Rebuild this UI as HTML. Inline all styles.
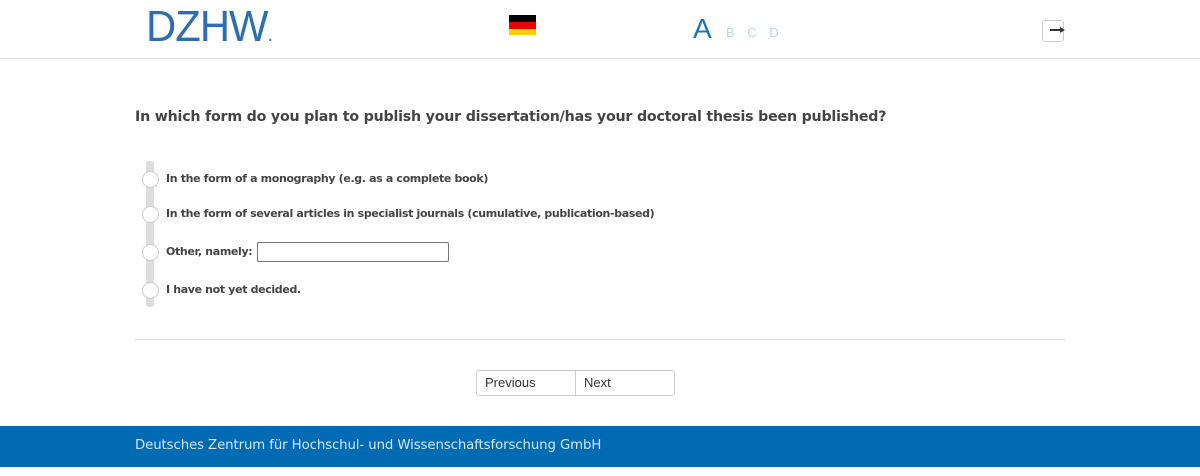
<!DOCTYPE html>
<html><head><meta charset="utf-8"><style>
body{margin:0;width:1200px;height:476px;background:#fff;position:relative;font-family:"DejaVu Sans","Liberation Sans",sans-serif;overflow:hidden}
.a{position:absolute}
.hdr{left:0;top:0;width:1200px;height:58px;border-bottom:1px solid #ddd}
.logo{left:146px;top:5px;font-family:"Liberation Sans",sans-serif;font-size:44px;color:#2d6db5;letter-spacing:-1px;line-height:44px;transform:scaleX(0.95);transform-origin:0 0}
.q{left:135px;top:109px;font-size:14.2px;font-weight:bold;color:#444;letter-spacing:-0.2px}
.opt{left:166px;font-size:11px;font-weight:bold;color:#444;letter-spacing:-0.35px}
.rad{left:142px;width:15px;height:15px;border-radius:50%;background:#fff;border:1px solid #ccc}
.btn{top:370px;border:1px solid #ccc;font-family:"Liberation Sans",sans-serif;font-size:13px;color:#333;line-height:24px;padding-left:8px;box-sizing:border-box;height:26px}
</style></head><body>
<div class="a hdr"></div>
<div class="a logo">DZHW<span style="font-size:20px">.</span></div>
<div class="a" style="left:509px;top:15px;width:27px;height:7px;background:#000"></div>
<div class="a" style="left:509px;top:22px;width:27px;height:7px;background:#e00"></div>
<div class="a" style="left:509px;top:29px;width:27px;height:6px;background:#fc0"></div>
<div class="a" style="left:693px;top:13px;font-family:'Liberation Sans',sans-serif;font-size:28px;color:#1a73c0">A</div>
<div class="a" style="left:726px;top:25px;font-family:'Liberation Sans',sans-serif;font-size:13px;color:#b7d3ee;word-spacing:9px">B C D</div>
<div class="a" style="left:1042px;top:20px;width:20px;height:20px;border:1px solid #ccc;border-radius:3px"></div>
<div class="a" style="left:1050px;top:29px;width:12px;height:2px;background:#333"></div>
<div class="a" style="left:1060px;top:27px;border-left:5px solid #333;border-top:3px solid transparent;border-bottom:3px solid transparent"></div>
<div class="a q">In which form do you plan to publish your dissertation/has your doctoral thesis been published?</div>
<div class="a" style="left:146px;top:161px;width:8px;height:146px;background:#ddd;border-radius:3px"></div>
<div class="a rad" style="top:171px"></div>
<div class="a rad" style="top:206px"></div>
<div class="a rad" style="top:244px"></div>
<div class="a rad" style="top:282px"></div>
<div class="a opt" style="top:172px">In the form of a monography (e.g. as a complete book)</div>
<div class="a opt" style="top:207px">In the form of several articles in specialist journals (cumulative, publication-based)</div>
<div class="a opt" style="top:245px">Other, namely:</div>
<div class="a" style="left:257px;top:242px;width:190px;height:18px;border:1px solid #777;border-radius:2px"></div>
<div class="a opt" style="top:283px">I have not yet decided.</div>
<div class="a" style="left:135px;top:339px;width:930px;height:1px;background:#ddd"></div>
<div class="a btn" style="left:476px;width:100px;border-radius:3px 0 0 3px">Previous</div>
<div class="a btn" style="left:575px;width:100px;border-radius:0 3px 3px 0">Next</div>
<div class="a" style="left:0;top:426px;width:1200px;height:41px;background:#006ab3"></div>
<div class="a" style="left:135px;top:438px;font-size:13.3px;color:#d6e6f5;letter-spacing:-0.1px">Deutsches Zentrum für Hochschul- und Wissenschaftsforschung GmbH</div>
</body></html>
